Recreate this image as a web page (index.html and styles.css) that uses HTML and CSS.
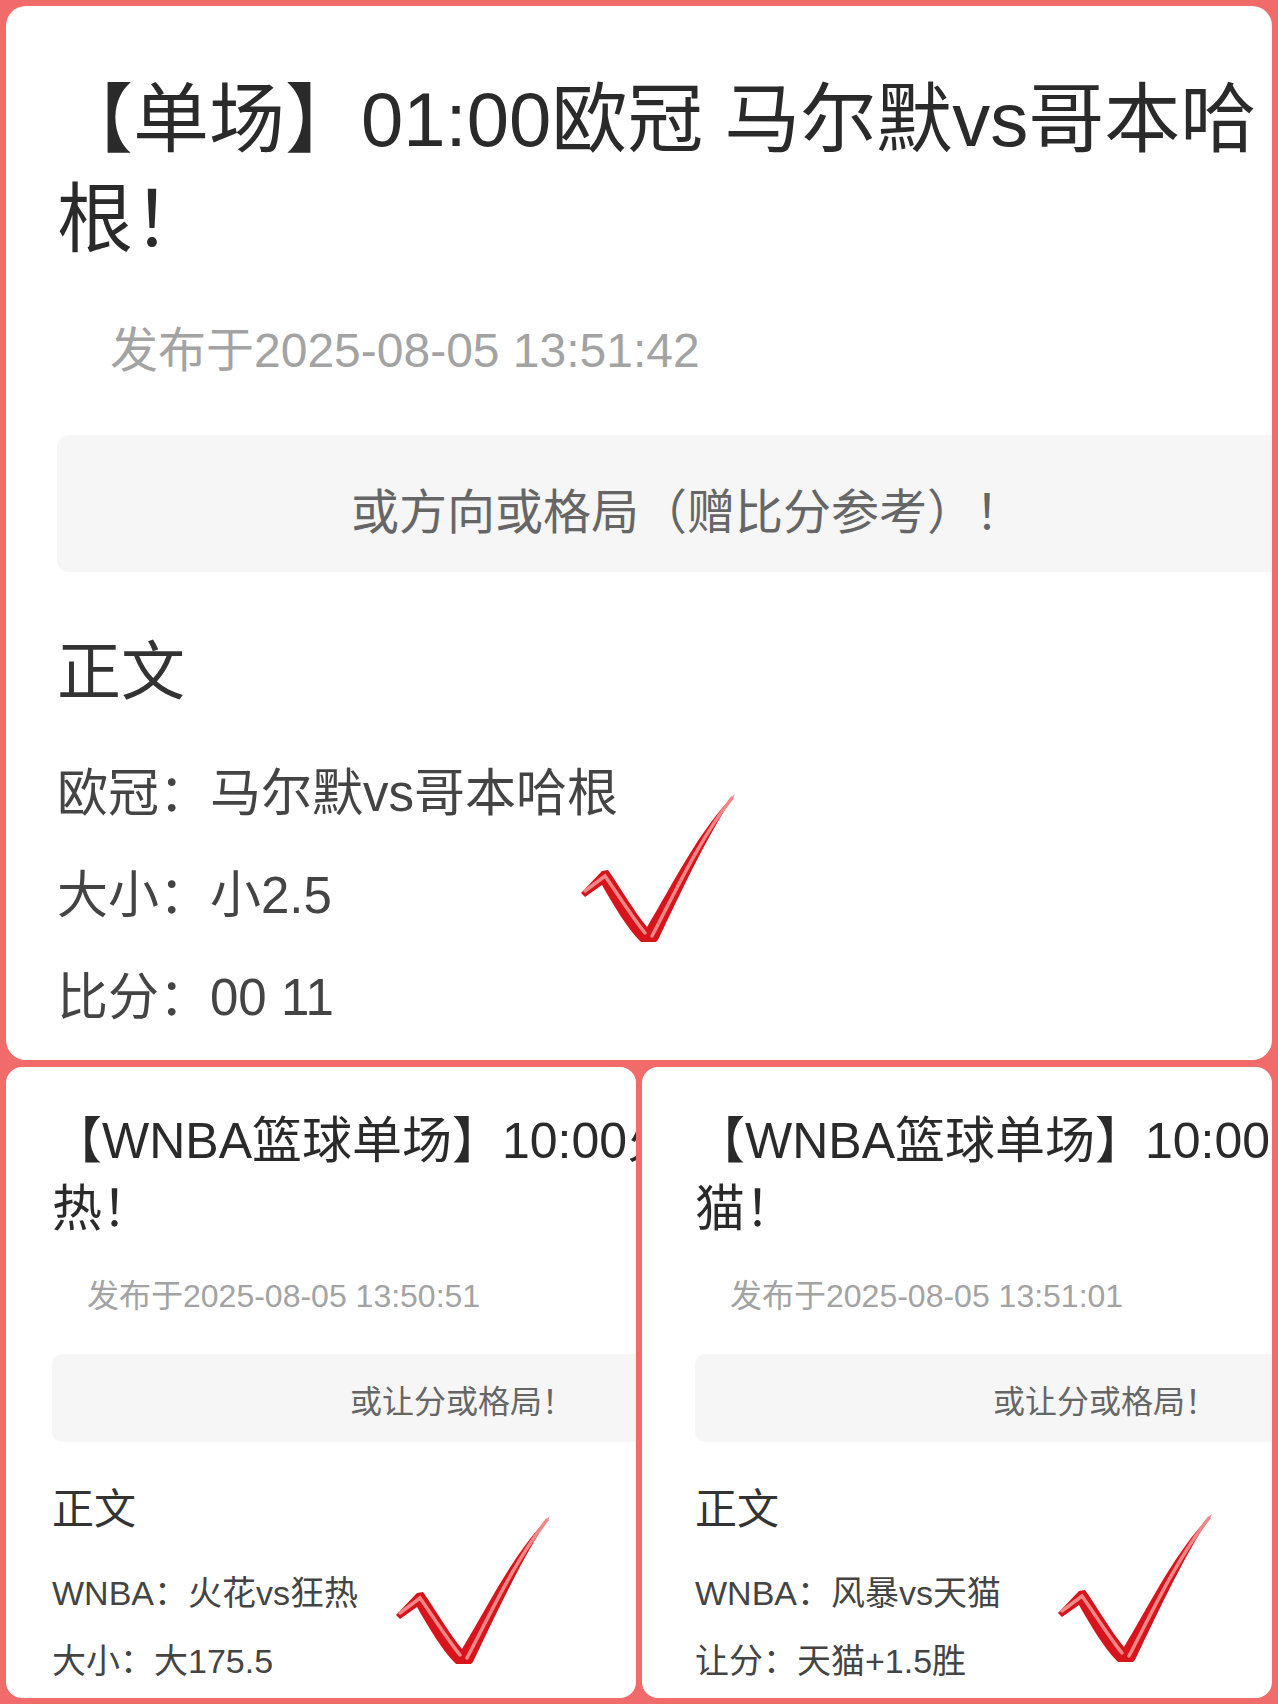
FILE: index.html
```html
<html lang="zh-CN">
<head>
    <meta charset="UTF-8">
    <meta name="viewport" content="width=device-width, initial-scale=1.0">
    <title>单场推荐</title>
    <link rel="stylesheet" href="styles.css">
</head>
<body>
    <div class="page">

        <div class="card card-main">
            <div class="inner">
                <h1 class="titulo">【单场】01:00欧冠 马尔默vs哥本哈根！</h1>
                <p class="data">发布于2025-08-05 13:51:42</p>
                <div class="resumo">或方向或格局（赠比分参考）！</div>
                <h2 class="secao">正文</h2>
                <p class="linha">欧冠：马尔默vs哥本哈根</p>
                <p class="linha">大小：小2.5</p>
                <p class="linha">比分：00 11</p>
            </div>
            <svg class="tick tick-main" viewBox="0 0 160 150" width="160" height="150">
                <path class="tick-dark" d="M3 101 L24 79 L30 78 C44 98 57 121 69 135 C95 92 121 38 157 2 C130 42 103 100 80 148 Q72 157 62 149 C49 136 36 114 24 93 L7 105 Z"/>
                <path class="tick-light" d="M7 99 L27 84 C41 104 54 125 67 141 M74 144 C97 100 123 45 154 6"/>
            </svg>
        </div>

        <div class="row">
            <div class="card card-small">
                <div class="inner">
                    <h1 class="titulo">【WNBA篮球单场】10:00火花vs狂热！</h1>
                    <p class="data">发布于2025-08-05 13:50:51</p>
                    <div class="resumo">或让分或格局！</div>
                    <h2 class="secao">正文</h2>
                    <p class="linha">WNBA：火花vs狂热</p>
                    <p class="linha">大小：大175.5</p>
                </div>
                <svg class="tick tick-left" viewBox="0 0 160 150" width="160" height="150">
                    <path class="tick-dark" d="M3 101 L24 79 L30 78 C44 98 57 121 69 135 C95 92 121 38 157 2 C130 42 103 100 80 148 Q72 157 62 149 C49 136 36 114 24 93 L7 105 Z"/>
                    <path class="tick-light" d="M7 99 L27 84 C41 104 54 125 67 141 M74 144 C97 100 123 45 154 6"/>
                </svg>
            </div>

            <div class="card card-small card-right">
                <div class="inner">
                    <h1 class="titulo">【WNBA篮球单场】10:00风暴vs天猫！</h1>
                    <p class="data">发布于2025-08-05 13:51:01</p>
                    <div class="resumo">或让分或格局！</div>
                    <h2 class="secao">正文</h2>
                    <p class="linha">WNBA：风暴vs天猫</p>
                    <p class="linha">让分：天猫+1.5胜</p>
                </div>
                <svg class="tick tick-right" viewBox="0 0 160 150" width="160" height="150">
                    <path class="tick-dark" d="M3 101 L24 79 L30 78 C44 98 57 121 69 135 C95 92 121 38 157 2 C130 42 103 100 80 148 Q72 157 62 149 C49 136 36 114 24 93 L7 105 Z"/>
                    <path class="tick-light" d="M7 99 L27 84 C41 104 54 125 67 141 M74 144 C97 100 123 45 154 6"/>
                </svg>
            </div>
        </div>

    </div>
</body>
</html>
```

FILE: styles.css
```css
body {
    margin: 0;
    background-color: #f26b6b;
    font-family: "Liberation Sans", "Noto Sans CJK SC", sans-serif;
    color: #333;
}
.page {
    width: 1278px;
    height: 1704px;
    box-sizing: border-box;
    padding: 6px;
    display: flex;
    flex-direction: column;
    gap: 7px;
}
.row {
    display: grid;
    grid-template-columns: 1fr 1fr;
    gap: 6px;
}
.card {
    position: relative;
    background-color: #fff;
    overflow: hidden;
    box-sizing: border-box;
}
h1, h2, p {
    margin: 0;
    font-weight: normal;
}

/* cartao grande */
.card-main {
    height: 1054px;
    border-radius: 20px;
    padding: 64px 0 0 51px;
}
.card-main .inner {
    width: 1260px;
}
.card-main .titulo {
    font-size: 76px;
    line-height: 100px;
    color: #2a2a2a;
}
.card-main .data {
    margin: 51px 0 0 53px;
    font-size: 48px;
    line-height: 60px;
    color: #a3a3a3;
}
.card-main .resumo {
    margin-top: 54px;
    height: 137px;
    padding-top: 8px;
    border-radius: 12px;
    font-size: 48px;
}
.card-main .secao {
    margin-top: 62px;
    font-size: 64px;
    line-height: 76px;
}
.card-main .linha {
    font-size: 51px;
    line-height: 102px;
}
.card-main .secao + .linha {
    margin-top: 33px;
}

/* cartoes pequenos */
.card-small {
    height: 631px;
    border-radius: 16px;
    padding: 40px 0 0 46px;
}
.card-right {
    padding-left: 53px;
}
.card-small .inner {
    width: 820px;
}
.card-small .titulo {
    font-size: 50px;
    line-height: 68px;
    color: #2a2a2a;
}
.card-small .data {
    margin: 33px 0 0 35px;
    font-size: 32px;
    line-height: 40px;
    color: #a3a3a3;
}
.card-small .resumo {
    margin-top: 38px;
    height: 88px;
    padding-top: 2px;
    border-radius: 10px;
    font-size: 32px;
}
.card-small .secao {
    margin-top: 40px;
    font-size: 42px;
    line-height: 56px;
}
.card-small .linha {
    font-size: 34px;
    line-height: 68px;
}
.card-small .secao + .linha {
    margin-top: 21px;
}

.resumo {
    box-sizing: border-box;
    display: flex;
    align-items: center;
    justify-content: center;
    background-color: #f6f6f6;
    color: #666;
}
.linha {
    color: #444;
}
.secao {
    color: #333;
}

/* vistos vermelhos por cima do texto */
.tick {
    position: absolute;
}
.tick-main {
    left: 572px;
    top: 786px;
}
.tick-left {
    left: 387px;
    top: 447px;
}
.tick-right {
    left: 413px;
    top: 445px;
}
.tick-dark {
    fill: #d7141c;
}
.tick-light {
    fill: none;
    stroke: #f38686;
    stroke-width: 3.5;
    stroke-linecap: round;
}
```
